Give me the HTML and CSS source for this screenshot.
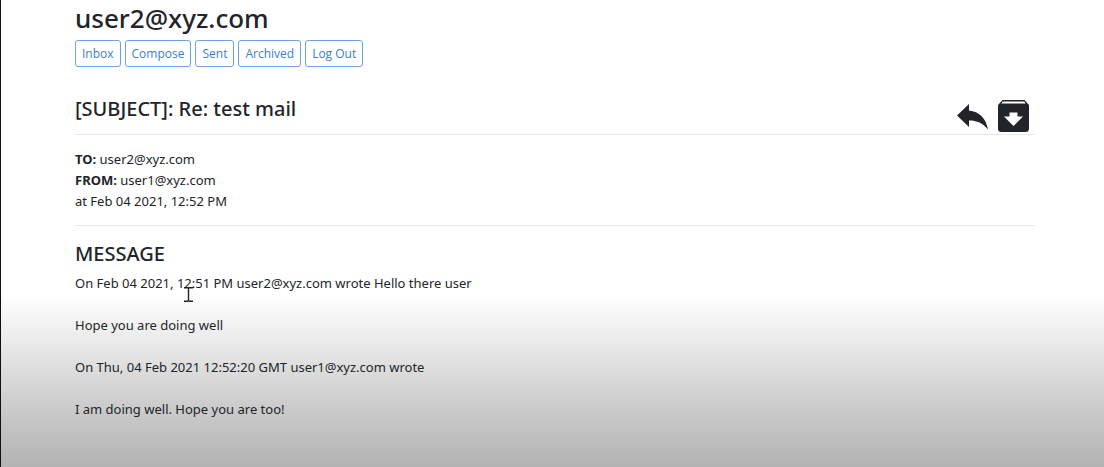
FILE: index.html
```html
<!DOCTYPE html>
<html lang="en">
<head>
<meta charset="utf-8">
<title>Mail</title>
<link rel="stylesheet" href="styles.css">
</head>
<body>
<div class="page">
  <header>
    <h1 class="account">user2@xyz.com</h1>
    <nav class="nav">
      <button type="button" class="btn">Inbox</button>
      <button type="button" class="btn">Compose</button>
      <button type="button" class="btn">Sent</button>
      <button type="button" class="btn">Archived</button>
      <a class="btn" href="#logout">Log Out</a>
    </nav>
  </header>
  <main>
    <div class="subject-row">
      <h2 class="heading">[SUBJECT]: Re: test mail</h2>
      <div class="actions">
        <button type="button" class="icon-btn" aria-label="Reply">
          <svg width="31" height="28" viewBox="0 0 31 28"><path d="M0 13.500 12 2v6.500C22 9.500 29 16 31 27.500 25.500 21 20 18.500 12 18.500V25z"/></svg>
        </button>
        <button type="button" class="icon-btn" aria-label="Archive">
          <svg width="31" height="32" viewBox="0 0 31 32"><path fill-rule="evenodd" d="M4.500 0h22L31 5v23.500a3.500 3.500 0 0 1-3.500 3.500h-24A3.500 3.500 0 0 1 0 28.500V5zM4.800 1.500 3.200 3.600h24.600l-1.600-2.100zM11.500 12.500v4H6L15.500 26 25 16.500h-5.500v-4z"/></svg>
        </button>
      </div>
    </div>
    <div class="meta">
      <div><strong>TO:</strong> user2@xyz.com</div>
      <div><strong>FROM:</strong> user1@xyz.com</div>
      <div>at Feb 04 2021, 12:52 PM</div>
    </div>
    <h2 class="heading">MESSAGE</h2>
    <div class="message">
      <p>On Feb 04 2021, 12:51 PM user2@xyz.com wrote Hello there user</p>
      <p>Hope you are doing well</p>
      <p>On Thu, 04 Feb 2021 12:52:20 GMT user1@xyz.com wrote</p>
      <p>I am doing well. Hope you are too!</p>
    </div>
  </main>
</div>
<svg class="cursor" width="9" height="15" viewBox="0 0 9 15"><path d="M0 .8h3.500l1 .7 1-.7H9M4.500 1v13M0 14.200h3.500l1-.7 1 .7H9"/></svg>
</body>
</html>
```
FILE: styles.css
```css
* { box-sizing: border-box; }
body {
  margin: 0;
  font-family: "Noto Sans", "Open Sans", sans-serif;
  font-size: 13px;
  line-height: 21px;
  color: #212529;
  background: #fff;
}
.page {
  min-height: 100vh;
  padding: 0 69px 24px 74px;
  border-left: 1px solid #111;
  background: linear-gradient(to bottom, #fff 295px, #e6e6e6 350px, #c8c8c8 415px, #b3b3b3 467px);
}
h1, h2, p { margin: 0; }
.account {
  font-size: 26px;
  line-height: 36px;
  font-weight: 500;
}
.nav {
  display: flex;
  flex-wrap: wrap;
  gap: 4px;
  padding-top: 4px;
}
.btn {
  padding: 3px 6px;
  border: 1px solid #6ba3e6;
  border-radius: 3px;
  background: #fff;
  color: #3c7ed2;
  font-family: "Open Sans", "Noto Sans", sans-serif;
  font-size: 12px;
  line-height: 19px;
  text-decoration: none;
}
.subject-row {
  display: flex;
  justify-content: space-between;
  margin-top: 28px;
  padding-bottom: 2px;
  border-bottom: 1px solid #e8e8e8;
}
.heading {
  font-size: 20px;
  line-height: 28px;
  font-weight: 500;
}
.actions {
  display: flex;
  gap: 10px;
  padding: 5px 6px 0 0;
}
.icon-btn {
  display: flex;
  align-items: center;
  padding: 0;
  border: 0;
  background: none;
  color: #212529;
}
.icon-btn svg { fill: currentColor; }
.meta {
  margin-bottom: 14px;
  padding: 14px 0 13px;
  border-bottom: 1px solid #e8e8e8;
}
.message {
  display: grid;
  gap: 21px;
  padding-top: 5px;
}
.cursor {
  position: absolute;
  left: 184px;
  top: 287px;
  fill: none;
  stroke: #222;
  stroke-width: 1.4;
  pointer-events: none;
}
```
